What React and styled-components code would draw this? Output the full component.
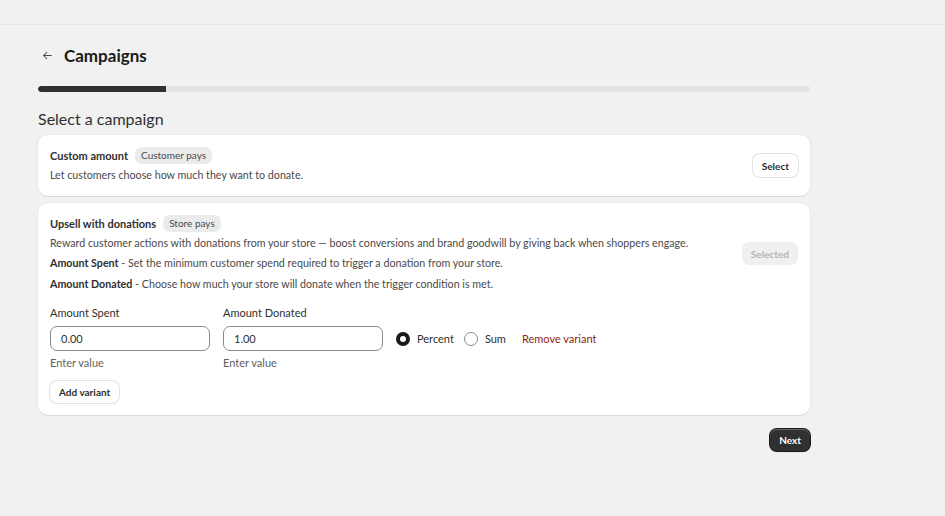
import React from "react";
import styled, { createGlobalStyle } from "styled-components";

const Global = createGlobalStyle`
  html, body { margin: 0; padding: 0; background: #f1f1f1; }
  body { font-family: Lato, "Noto Sans", sans-serif; color: #303030; font-size: 11px; }
  * { box-sizing: border-box; }
`;

const Page = styled.div`
  min-height: 516px;
  background: #f1f1f1;
`;

const TopBar = styled.div`
  height: 25px;
  border-bottom: 1px solid #e6e6e6;
`;

const Main = styled.div`
  width: 772px;
  margin-left: 38px;
  padding-top: 19px;
  display: flex;
  flex-direction: column;
`;

const Header = styled.div`
  display: flex;
  align-items: center;
  gap: 10px;
  height: 22px;
`;

const BackBtn = styled.button`
  border: 0;
  background: transparent;
  padding: 0 0 0 2px;
  width: 16px;
  height: 16px;
  display: flex;
  align-items: center;
  justify-content: center;
  color: #4a4a4a;
  cursor: pointer;
`;

const Title = styled.h1`
  margin: 0;
  font-size: 17px;
  font-weight: 700;
  color: #1a1a1a;
`;

const Progress = styled.div`
  margin-top: 20px;
  height: 6px;
  border-radius: 3px;
  background: #e3e3e3;
  overflow: hidden;
`;

const ProgressFill = styled.div`
  height: 100%;
  background: #303030;
  border-radius: 3px 0 0 3px;
`;

const Subtitle = styled.h2`
  margin: 16px 0 0;
  font-size: 16px;
  font-weight: 400;
  color: #303030;
  line-height: 22px;
`;

const Cards = styled.div`
  margin-top: 5px;
  display: flex;
  flex-direction: column;
  gap: 7px;
`;

const Card = styled.div`
  background: #fff;
  border-radius: 10px;
  box-shadow: 0 1px 0 rgba(26, 26, 26, 0.07), 0 0 0 1px rgba(0,0,0,0.03);
  padding: ${p => p.$pt || 11}px 12px ${p => p.$pb || 10}px;
  display: flex;
  flex-direction: column;
`;

const CardTop = styled.div`
  display: flex;
  align-items: center;
  justify-content: space-between;
`;

const CardText = styled.div`
  display: flex;
  flex-direction: column;
`;

const TitleRow = styled.div`
  display: flex;
  align-items: center;
  gap: 7px;
  height: 19px;
`;

const CardTitle = styled.span`
  font-weight: 700;
  font-size: 11px;
  color: #303030;
`;

const Badge = styled.span`
  background: #ebebeb;
  border-radius: 7px;
  padding: 0 6px;
  height: 17px;
  line-height: 17px;
  font-size: 10px;
  color: #4a4a4a;
`;

const Line = styled.p`
  margin: 0;
  font-size: 10.7px;
  line-height: 20.5px;
  color: #4a4a4a;
  b { color: #303030; font-weight: 700; }
`;

const Button = styled.button`
  font-family: inherit;
  font-size: 10px;
  font-weight: 700;
  height: ${p => p.$tall ? "23px" : "22px"};
  padding: 0 9px;
  border-radius: 7px;
  border: 0;
  cursor: pointer;
  background: ${p => p.$variant === "disabled" ? "#f0f0f0" : p.$variant === "primary" ? "#303030" : "#fff"};
  color: ${p => p.$variant === "disabled" ? "#b5b5b5" : p.$variant === "primary" ? "#fff" : "#303030"};
  box-shadow: ${p => p.$variant === "disabled" ? "none" : p.$variant === "primary"
    ? "0 0 0 1px #1a1a1a, inset 0 1px 0 rgba(255,255,255,0.25), 0 1px 1px rgba(0,0,0,0.3)"
    : "0 0 0 1px #e3e3e3, 0 1px 0 #cfcfcf"};
`;

const Fields = styled.div`
  margin-top: 11px;
  display: flex;
  align-items: flex-start;
  gap: 13px;
`;

const Field = styled.div`
  width: 160px;
  display: flex;
  flex-direction: column;
`;

const Label = styled.label`
  font-size: 11px;
  color: #303030;
  line-height: 16px;
  height: 17px;
`;

const Input = styled.input`
  margin-top: 4px;
  width: 100%;
  height: 25px;
  border: 1px solid #8a8a8a;
  border-radius: 7px;
  padding: 0 10px;
  font-family: inherit;
  font-size: 11px;
  color: #303030;
  background: #fff;
  outline: none;
`;

const Help = styled.div`
  margin-top: 4px;
  font-size: 11px;
  color: #616161;
  line-height: 16px;
`;

const Options = styled.div`
  margin-top: 21px;
  height: 25px;
  display: flex;
  align-items: center;
`;

const RadioLabel = styled.label`
  display: flex;
  align-items: center;
  gap: 7px;
  font-size: 11px;
  color: #303030;
  margin-right: 10px;
`;

const RadioDot = styled.span`
  width: 14px;
  height: 14px;
  border-radius: 50%;
  border: ${p => p.$checked ? "4px solid #1a1a1a" : "1px solid #8a8a8a"};
  background: #fff;
  display: inline-block;
`;

const RemoveLink = styled.a`
  margin-left: 6px;
  font-size: 11px;
  color: #8e1f0b;
  cursor: pointer;
`;

const AddRow = styled.div`
  margin-top: 10px;
`;

const Footer = styled.div`
  display: flex;
  justify-content: flex-end;
  margin-top: 14px;
`;

const ArrowLeft = () => (
  <svg width="13" height="13" viewBox="0 0 20 20" fill="none" stroke="currentColor" strokeWidth="1.6" strokeLinecap="round" strokeLinejoin="round">
    <path d="M16 10H4" />
    <path d="M9 5l-5 5 5 5" />
  </svg>
);

export default function App() {
  return (
    <Page>
      <Global />
      <TopBar />
      <Main>
        <Header>
          <BackBtn aria-label="Back"><ArrowLeft /></BackBtn>
          <Title>Campaigns</Title>
        </Header>
        <Progress>
          <ProgressFill style={{ width: "16.6%" }} />
        </Progress>
        <Subtitle>Select a campaign</Subtitle>
        <Cards>
          <Card $pt={11} $pb={10}>
            <CardTop>
              <CardText>
                <TitleRow>
                  <CardTitle>Custom amount</CardTitle>
                  <Badge>Customer pays</Badge>
                </TitleRow>
                <Line>Let customers choose how much they want to donate.</Line>
              </CardText>
              <Button $tall>Select</Button>
            </CardTop>
          </Card>
          <Card $pt={11} $pb={12}>
            <CardTop>
              <CardText>
                <TitleRow>
                  <CardTitle>Upsell with donations</CardTitle>
                  <Badge>Store pays</Badge>
                </TitleRow>
                <Line>Reward customer actions with donations from your store — boost conversions and brand goodwill by giving back when shoppers engage.</Line>
                <Line><b>Amount Spent</b> - Set the minimum customer spend required to trigger a donation from your store.</Line>
                <Line><b>Amount Donated</b> - Choose how much your store will donate when the trigger condition is met.</Line>
              </CardText>
              <Button $variant="disabled" $tall>Selected</Button>
            </CardTop>
            <Fields>
              <Field>
                <Label>Amount Spent</Label>
                <Input defaultValue="0.00" />
                <Help>Enter value</Help>
              </Field>
              <Field>
                <Label>Amount Donated</Label>
                <Input defaultValue="1.00" />
                <Help>Enter value</Help>
              </Field>
              <Options>
                <RadioLabel><RadioDot $checked />Percent</RadioLabel>
                <RadioLabel><RadioDot />Sum</RadioLabel>
                <RemoveLink>Remove variant</RemoveLink>
              </Options>
            </Fields>
            <AddRow>
              <Button>Add variant</Button>
            </AddRow>
          </Card>
        </Cards>
        <Footer>
          <Button $variant="primary">Next</Button>
        </Footer>
      </Main>
    </Page>
  );
}
